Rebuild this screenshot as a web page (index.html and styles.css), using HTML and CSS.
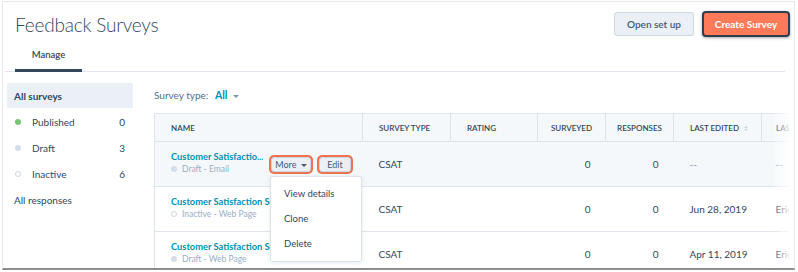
FILE: index.html
```html
<!DOCTYPE html>
<html>
<head>
<meta charset="utf-8">
<link rel="stylesheet" href="styles.css">
</head>
<body>
<div class="frame">
  <div class="header">
    <h1 class="title">Feedback Surveys</h1>
    <div class="actions">
      <button class="btn btn-secondary">Open set up</button>
      <button class="btn btn-primary">Create Survey</button>
    </div>
  </div>
  <div class="tabs">
    <div class="tab active">Manage</div>
  </div>
  <div class="content">
    <ul class="sidebar">
      <li class="side-item selected"><span class="side-label">All surveys</span></li>
      <li class="side-item"><span class="dot dot-green"></span><span class="side-label">Published</span><span class="count">0</span></li>
      <li class="side-item"><span class="dot dot-grey"></span><span class="side-label">Draft</span><span class="count">3</span></li>
      <li class="side-item"><span class="dot dot-hollow"></span><span class="side-label">Inactive</span><span class="count">6</span></li>
      <li class="side-item plain"><span class="side-label">All responses</span></li>
    </ul>
    <div class="main">
      <div class="filter">Survey type: <span class="filter-value">All <span class="caret"></span></span></div>
      <div class="table-wrap">
        <table class="table">
          <colgroup>
            <col style="width:208px"><col style="width:88px"><col style="width:87px"><col style="width:68px"><col style="width:68px"><col style="width:88px"><col style="width:110px">
          </colgroup>
          <thead>
            <tr>
              <th>Name</th>
              <th>Survey type</th>
              <th>Rating</th>
              <th class="c">Surveyed</th>
              <th class="c">Responses</th>
              <th>Last edited <span class="sort"><span class="up"></span><span class="down"></span></span></th>
              <th class="last">Last edited by</th>
            </tr>
          </thead>
          <tbody>
            <tr class="hover">
              <td>
                <div class="name-cell">
                  <div class="name-block short">
                    <div class="name">Customer Satisfactio...</div>
                    <div class="status"><span class="sdot dot-grey"></span>Draft - Email</div>
                  </div>
                  <div class="row-actions">
                    <button class="mini more">More <span class="caret dark"></span></button>
                    <button class="mini edit">Edit</button>
                    <ul class="menu">
                      <li>View details</li>
                      <li>Clone</li>
                      <li>Delete</li>
                    </ul>
                  </div>
                </div>
              </td>
              <td>CSAT</td>
              <td></td>
              <td class="num">0</td>
              <td class="num">0</td>
              <td class="muted">--</td>
              <td class="muted last">--</td>
            </tr>
            <tr>
              <td>
                <div class="name-block">
                  <div class="name">Customer Satisfaction Survey</div>
                  <div class="status"><span class="sdot dot-hollow"></span>Inactive - Web Page</div>
                </div>
              </td>
              <td>CSAT</td>
              <td></td>
              <td class="num">0</td>
              <td class="num">0</td>
              <td>Jun 28, 2019</td>
              <td class="last">Eric Smith</td>
            </tr>
            <tr>
              <td>
                <div class="name-block">
                  <div class="name">Customer Satisfaction Survey</div>
                  <div class="status"><span class="sdot dot-grey"></span>Draft - Web Page</div>
                </div>
              </td>
              <td>CSAT</td>
              <td></td>
              <td class="num">0</td>
              <td class="num">0</td>
              <td>Apr 11, 2019</td>
              <td class="last">Eric Smith</td>
            </tr>
          </tbody>
        </table>
        <div class="fade"></div>
      </div>
    </div>
  </div>
</div>
</body>
</html>
```

FILE: styles.css
```css
* { box-sizing: border-box; }
html, body { margin: 0; padding: 0; background: #fff; }
body {
  font-family: Lato, "Open Sans", sans-serif;
  color: #33475b;
  width: 798px;
  height: 272px;
  overflow: hidden;
}
.frame {
  margin: 1px 3px 0 2px;
  height: 269px;
  border: 1px solid #e6e9ed;
  border-bottom: 2px solid #8d8d8d;
  overflow: hidden;
}
.header {
  display: flex;
  align-items: center;
  justify-content: space-between;
  padding: 9px 4px 0 12px;
}
.title {
  margin: 0;
  font-size: 19px;
  font-weight: 300;
  letter-spacing: -0.2px;
  color: #33475b;
  line-height: 25px;
}
.actions { display: flex; gap: 8px; align-items: center; }
.btn {
  font-family: Lato, sans-serif;
  font-size: 10px;
  border-radius: 3px;
  white-space: nowrap;
  padding: 0;
  cursor: pointer;
}
.btn-secondary {
  background: #eaf0f6;
  border: 1px solid #cbd6e2;
  color: #425b76;
  width: 80px;
  height: 24px;
  font-weight: 600;
}
.btn-primary {
  background: #ff7a59;
  border: 2px solid #2d3e50;
  color: #fff;
  font-weight: 700;
  width: 88px;
  height: 26px;
  border-radius: 4px;
  box-shadow: 0 1px 3px rgba(0,0,0,0.35);
}
.tabs {
  margin: 4px 9px 0 2px;
  border-bottom: 1px solid #dfe3eb;
  display: flex;
}
.tab {
  margin-left: 10px;
  width: 67px;
  text-align: center;
  font-size: 9.5px;
  font-weight: 600;
  line-height: 14px;
  padding: 7px 0;
  margin-bottom: -1px;
  border-bottom: 3px solid #33475b;
  color: #33475b;
}
.content {
  display: flex;
  padding-left: 4px;
  gap: 21px;
}
.sidebar {
  list-style: none;
  margin: 11px 0 0;
  padding: 0;
  width: 126px;
  flex: none;
}
.side-item {
  display: flex;
  align-items: center;
  height: 26px;
  padding: 0 8px 0 8px;
  font-size: 10px;
  color: #33475b;
}
.side-item.selected {
  background: #eaf0f6;
  border-radius: 2px;
  font-weight: 700;
  height: 25px;
  margin-bottom: 1px;
  padding-left: 7px;
}
.side-item.plain { padding-left: 7px; }
.side-label { flex: 1; }
.count { width: 10px; text-align: right; }
.dot {
  width: 6px; height: 6px; border-radius: 50%;
  margin-right: 11px; flex: none;
}
.dot-green { background: #79c46f; }
.dot-grey { background: #d5dde7; }
.dot-hollow { background: #fff; border: 1px solid #cbd6e2; }
.main { flex: 1; min-width: 0; }
.filter {
  margin-top: 16px;
  font-size: 10px;
  line-height: 14px;
  color: #516f90;
}
.filter-value {
  color: #0091ae;
  font-weight: 700;
  margin-left: 4px;
  font-size: 10.5px;
}
.caret {
  display: inline-block;
  width: 0; height: 0;
  border-left: 3px solid transparent;
  border-right: 3px solid transparent;
  border-top: 3px solid #7c98b6;
  vertical-align: middle;
  margin-left: 3px;
}
.caret.dark { border-top-color: #425b76; margin-left: 2px; }
.table-wrap {
  margin-top: 11px;
  width: 635px;
  position: relative;
  overflow: hidden;
  height: 160px;
}
.table {
  border-collapse: collapse;
  table-layout: fixed;
  width: 717px;
  font-size: 10px;
}
.table th {
  background: #f5f8fa;
  height: 28px;
  text-align: left;
  text-transform: uppercase;
  font-size: 8px;
  font-weight: 600;
  color: #33475b;
  padding: 0 0 0 16px;
  border: 1px solid #dfe3eb;
  white-space: nowrap;
  overflow: hidden;
}
.table th.c { text-align: center; padding: 0; }
.table th.last { padding-left: 14px; }
.sort {
  display: inline-flex;
  flex-direction: column;
  gap: 1px;
  vertical-align: middle;
  margin-left: 3px;
}
.sort span {
  width: 0; height: 0;
  border-left: 2.5px solid transparent;
  border-right: 2.5px solid transparent;
}
.sort .up { border-bottom: 2.5px solid #cbd6e2; }
.sort .down { border-top: 2.5px solid #cbd6e2; }
.table td {
  height: 45px;
  padding: 0 0 0 16px;
  border-bottom: 1px solid #dfe3eb;
  color: #33475b;
  white-space: nowrap;
  overflow: hidden;
  vertical-align: middle;
}
.table td:first-child { border-left: 1px solid #dfe3eb; overflow: visible; }
.table td.last { padding-left: 14px; }
.table tr.hover td { background: #f5f8fa; }
.table td.num { text-align: right; padding: 0 15px 0 0; }
.table td.muted { color: #7c98b6; }
.name-cell { display: flex; align-items: center; }
.name-block { padding-bottom: 3px; width: 190px; overflow: hidden; }
.name-block.short { width: 92px; }
.name {
  color: #0091ae;
  font-weight: 700;
  font-size: 9.3px;
  line-height: 12px;
  white-space: nowrap;
}
.status {
  font-size: 8.5px;
  line-height: 12px;
  color: #99afc4;
  display: flex;
  align-items: center;
}
.sdot {
  width: 6px; height: 6px; border-radius: 50%;
  margin: 0 5px 0 0;
  display: inline-block;
}
.row-actions {
  display: flex;
  gap: 8px;
  margin-left: 8px;
  position: relative;
}
.mini {
  font-family: Lato, sans-serif;
  font-size: 9px;
  color: #425b76;
  background: #eaf0f6;
  border: 1px solid #cbd6e2;
  border-radius: 3px;
  height: 15px;
  padding: 0;
  line-height: 13px;
  white-space: nowrap;
  box-shadow: 0 0 0 2px #f0734f;
}
.mini.more { width: 40px; }
.mini.edit { width: 32px; }
.menu {
  position: absolute;
  top: 19px;
  left: -1px;
  width: 92px;
  margin: 0;
  padding: 4px 0 0;
  list-style: none;
  background: #fff;
  border: 1px solid #dfe3eb;
  border-radius: 3px;
  height: 86px;
  box-shadow: 0 1px 4px rgba(45,62,80,0.12);
  z-index: 5;
}
.menu li {
  height: 25px;
  line-height: 25px;
  padding-left: 13px;
  font-size: 9.5px;
  color: #33475b;
}
.fade {
  position: absolute;
  top: 0; right: 0;
  width: 18px; height: 100%;
  background: linear-gradient(to right, rgba(255,255,255,0), rgba(255,255,255,0.85));
  box-shadow: 1px 0 2px rgba(0,0,0,0.06);
}
```
